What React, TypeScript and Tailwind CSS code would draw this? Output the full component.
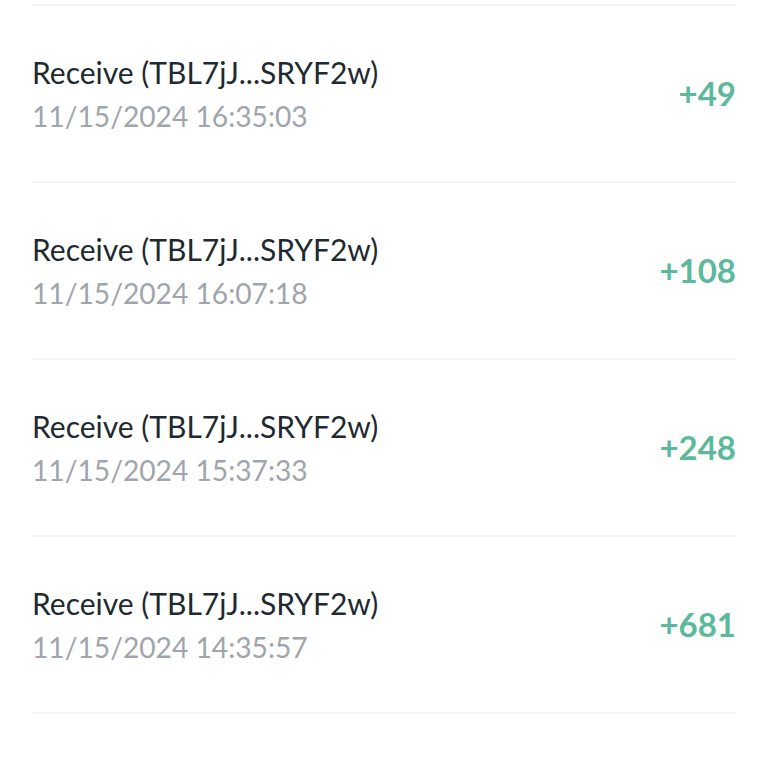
const rows = [
  { time: "11/15/2024 16:35:03", amount: "+49" },
  { time: "11/15/2024 16:07:18", amount: "+108" },
  { time: "11/15/2024 15:37:33", amount: "+248" },
  { time: "11/15/2024 14:35:57", amount: "+681" },
  { time: "11/15/2024 14:02:11", amount: "+95" },
];

export default function App() {
  return (
    <div className="h-[768px] overflow-hidden bg-white pt-[4px] font-['Lato',sans-serif]">
      <div className="mx-8 border-t-2 border-[#f1f4f4]">
        {rows.map((r) => (
          <div
            key={r.time}
            className="flex h-[177px] items-center justify-between border-b-2 border-[#f1f4f4]"
          >
            <div className="flex flex-col gap-[8px]">
              <span className="text-[30px] leading-[36px] text-[#1e2a30]">
                Receive (TBL7jJ...SRYF2w)
              </span>
              <span className="text-[28.2px] leading-[36px] text-[#a0a5ac]">{r.time}</span>
            </div>
            <span className="text-[33px] font-bold text-[#5cb99b]">{r.amount}</span>
          </div>
        ))}
      </div>
    </div>
  );
}
